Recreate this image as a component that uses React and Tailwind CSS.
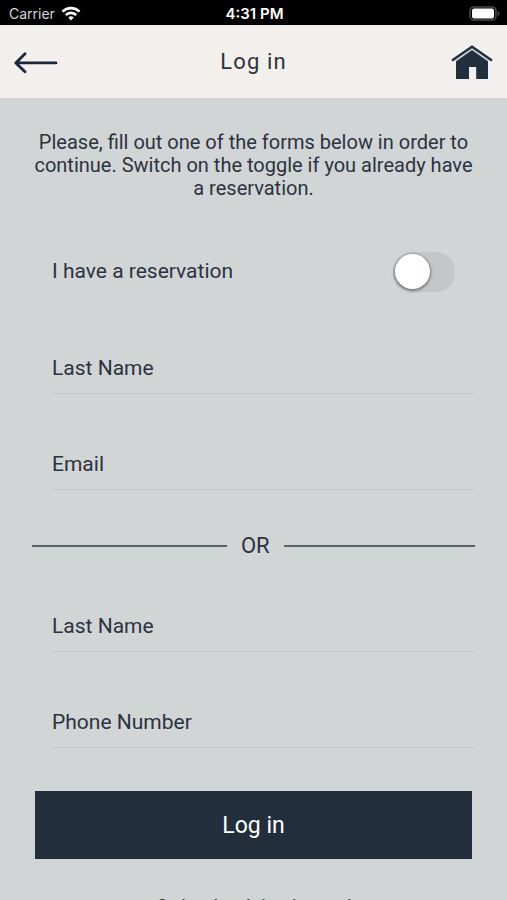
import { useState } from 'react';

const StatusBar = () => (
  <div className="grid h-[25px] grid-cols-3 items-center bg-black pt-[2px] pr-[7px] pl-[9px] font-['Inter',sans-serif] text-white">
    <div className="flex items-center gap-[6px] text-sm text-gray-300">
      Carrier
      <svg viewBox="0 0 20 15" className="h-[15px] w-5" fill="none" stroke="white" strokeWidth="2.7" aria-hidden="true">
        <path d="M1.5 5.6a12.2 12.2 0 0 1 17 0" />
        <path d="M4.8 9a7.4 7.4 0 0 1 10.4 0" />
        <path d="M10 14.4l-2.7-2.8a3.8 3.8 0 0 1 5.4 0z" fill="white" stroke="none" />
      </svg>
    </div>
    <div className="text-center text-[15px] font-semibold">4:31 PM</div>
    <svg viewBox="0 0 31 15" className="h-[15px] w-[31px] justify-self-end" aria-hidden="true">
      <rect x="1" y="1" width="26" height="13" rx="4" fill="black" stroke="#4b4b4b" strokeWidth="1.6" />
      <rect x="3" y="2.5" width="22" height="10" rx="2" fill="white" />
      <path d="M28.6 5v5q2-.8 2-2.500t-2-2.500z" fill="#4b4b4b" />
    </svg>
  </div>
);

const Header = () => (
  <header className="grid h-[73px] grid-cols-3 items-center bg-[#f2efec] px-[14px] pt-[2px]">
    <button type="button" aria-label="Back" className="w-11">
      <svg viewBox="0 0 44 22" className="h-[22px] w-11" fill="none" stroke="#1c2839" strokeWidth="2.8" strokeLinecap="round" strokeLinejoin="round">
        <path d="M11 1.800L1.800 10.900l9.200 8.900M1.800 10.900H42" />
      </svg>
    </button>
    <h1 className="text-center text-[22px] tracking-wider">Log in</h1>
    <button type="button" aria-label="Home" className="w-[42px] justify-self-end">
      <svg viewBox="0 0 42 35" className="h-[35px] w-[42px]">
        <path d="M21 4.500L37 15.500V34H25.200V22H18V34H5V15.500z" fill="#212e3e" />
        <path d="M4 16.100L21 4.100l17 12" fill="none" stroke="#cfd2d5" strokeWidth="1.500" />
        <path d="M1 15.500L21 1.700l20 13.800" fill="none" stroke="#212e3e" strokeWidth="2.400" />
      </svg>
    </button>
  </header>
);

const Field = ({ label, type = 'text', value, onChange }) => (
  <input
    type={type}
    aria-label={label}
    placeholder={label}
    value={value}
    onChange={(event) => onChange(event.target.value)}
    className="h-[52px] w-full border-b border-[#c2c5c6] bg-transparent text-[21px] outline-none placeholder:text-[#2b3340]"
  />
);

const Toggle = ({ id, checked, onChange }) => (
  <span className="relative inline-flex h-10 w-[62px]">
    <input
      id={id}
      type="checkbox"
      role="switch"
      checked={checked}
      onChange={(event) => onChange(event.target.checked)}
      className="peer h-10 w-[62px] cursor-pointer appearance-none rounded-full bg-[#c3c7c8] checked:bg-[#232e3d]"
    />
    <span className="pointer-events-none absolute top-[2px] left-[2px] size-[35px] rounded-full bg-white shadow-[0_1px_3px_1px_rgba(0,0,0,0.4)] transition peer-checked:translate-x-6" />
  </span>
);

const App = () => {
  const [hasReservation, setHasReservation] = useState(false);
  const [form, setForm] = useState({ emailLastName: '', email: '', phoneLastName: '', phone: '' });

  const updateForm = (field, value) => {
    setForm((current) => ({ ...current, [field]: value }));
  };

  return (
    <div className="h-screen overflow-hidden bg-[#d2d5d6] font-['Roboto',sans-serif] text-xl text-[#2b3340]">
      <StatusBar />
      <Header />
      <main className="px-8 pt-[33px]">
        <p className="text-center leading-[23px]">
          Please, fill out one of the forms below in order to continue. Switch on the toggle if you already have a reservation.
        </p>

        <form onSubmit={(event) => event.preventDefault()} className="pt-[52px]">
          <div className="flex items-center justify-between pr-5 pl-5">
            <label htmlFor="reservation" className="text-[21px]">
              I have a reservation
            </label>
            <Toggle id="reservation" checked={hasReservation} onChange={setHasReservation} />
          </div>

          <div className="flex flex-col gap-11 pt-[50px] pl-5">
            <Field label="Last Name" value={form.emailLastName} onChange={(value) => updateForm('emailLastName', value)} />
            <Field label="Email" type="email" value={form.email} onChange={(value) => updateForm('email', value)} />
          </div>

          <div className="flex items-center gap-[14px] pt-[42px]">
            <hr className="w-[44%] border-t-2 border-[#5c636b]" />
            <span className="text-[22px] leading-7">OR</span>
            <hr className="grow border-t-2 border-[#5c636b]" />
          </div>

          <div className="flex flex-col gap-11 pt-10 pl-5">
            <Field label="Last Name" value={form.phoneLastName} onChange={(value) => updateForm('phoneLastName', value)} />
            <Field label="Phone Number" type="tel" value={form.phone} onChange={(value) => updateForm('phone', value)} />
          </div>

          <div className="px-[3px] pt-[43px]">
            <button type="submit" className="h-[68px] w-full bg-[#232e3d] pt-[2px] text-[23px] text-white">
              Log in
            </button>
          </div>
        </form>

        <p className="pt-[34px] text-center">
          <a href="#card">Or log back in via card</a>
        </p>
      </main>
    </div>
  );
};

export default App;
